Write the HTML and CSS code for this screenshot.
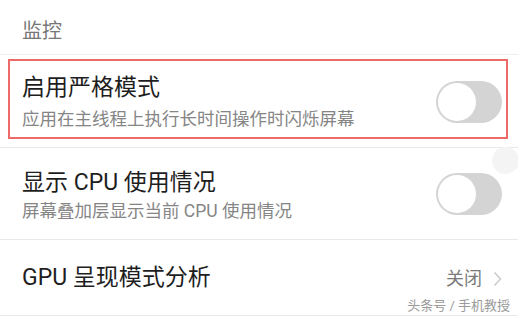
FILE: index.html
```html
<!DOCTYPE html>
<html lang="zh-CN">
<head>
<meta charset="utf-8">
<title>监控</title>
<link rel="stylesheet" href="styles.css">
</head>
<body>
<div class="screen">
  <div class="section-header">监控</div>

  <div class="item item-first">
    <div class="highlight">
      <div class="texts">
        <div class="title">启用严格模式</div>
        <div class="summary summary-first">应用在主线程上执行长时间操作时闪烁屏幕</div>
      </div>
      <div class="switch switch-first"><div class="knob"></div></div>
    </div>
  </div>

  <div class="item item-second">
    <div class="texts">
      <div class="title">显示 CPU 使用情况</div>
      <div class="summary summary-second">屏幕叠加层显示当前 CPU 使用情况</div>
    </div>
    <div class="switch switch-second"><div class="knob"></div></div>
  </div>

  <div class="item item-third">
    <div class="title">GPU 呈现模式分析</div>
    <div class="value">
      <span class="value-text">关闭</span>
      <svg class="chevron" width="9" height="16" viewBox="0 0 9 16"><path d="M1.5 1.5 L7.5 8 L1.5 14.5" fill="none" stroke="#c9c9c9" stroke-width="1.4"/></svg>
    </div>
  </div>

  <div class="float-dot"></div>
  <div class="watermark">头条号 / 手机教授</div>
</div>
</body>
</html>
```

FILE: styles.css
```css
html, body {
  margin: 0;
  padding: 0;
  background: #ffffff;
}

.screen {
  position: relative;
  width: 518px;
  height: 319px;
  overflow: hidden;
  font-family: Roboto, "Noto Sans CJK SC", sans-serif;
  color: #1f1f1f;
}

.section-header {
  box-sizing: border-box;
  height: 55px;
  padding: 9px 0 0 22px;
  font-size: 20px;
  line-height: 45px;
  color: #777777;
  border-bottom: 1px solid #efefef;
}

.item {
  box-sizing: border-box;
  border-bottom: 1px solid #e9e9e9;
  display: flex;
}

.item-first {
  height: 93px;
  padding: 4px 10px 8px 8px;
}

.highlight {
  box-sizing: border-box;
  flex: 1;
  height: 80px;
  border: 2px solid #ec6a68;
  display: flex;
  align-items: flex-start;
  justify-content: space-between;
  padding: 13px 4px 0 12px;
}

.texts {
  display: flex;
  flex-direction: column;
}

.title {
  font-size: 23px;
  line-height: 28px;
  color: #1e1e1e;
}

.summary {
  font-size: 17.5px;
  line-height: 24px;
  color: #858585;
}

.summary-first {
  margin-top: 5px;
}

.summary-second {
  margin-top: 1.5px;
}

.switch {
  position: relative;
  width: 66px;
  height: 42px;
  border-radius: 21px;
  background: #d4d4d4;
  flex-shrink: 0;
}

.switch-first {
  margin-top: 7px;
}

.switch-second {
  margin-top: 4px;
}

.knob {
  position: absolute;
  top: 2px;
  left: 2px;
  width: 38px;
  height: 38px;
  border-radius: 50%;
  background: #ffffff;
}

.item-second {
  height: 92px;
  padding: 21px 16px 0 22px;
  align-items: flex-start;
  justify-content: space-between;
}

.item-third {
  height: 76px;
  padding: 0 16px 0 22px;
  align-items: center;
  justify-content: space-between;
}

.value {
  display: flex;
  align-items: center;
  gap: 11px;
  padding-top: 3px;
}

.value-text {
  font-size: 18px;
  line-height: 24px;
  color: #7a7a7a;
}

.chevron {
  display: block;
}

.float-dot {
  position: absolute;
  left: 492px;
  top: 147px;
  width: 27px;
  height: 27px;
  border-radius: 50%;
  background: #f4f4f4;
}

.watermark {
  position: absolute;
  right: 8px;
  top: 297px;
  font-size: 13px;
  line-height: 18px;
  color: #9a9a9a;
}
```
